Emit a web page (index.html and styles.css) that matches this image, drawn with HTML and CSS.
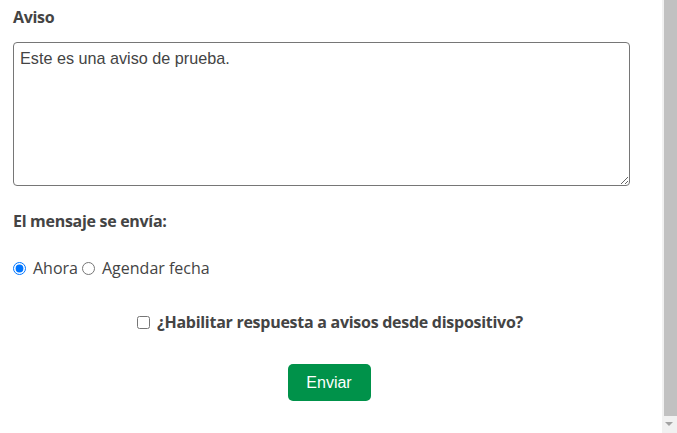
FILE: index.html
```html
<!DOCTYPE html>
<html lang="es">
<head>
  <meta charset="UTF-8">
  <meta name="viewport" content="width=device-width, initial-scale=1.0">
  <title>Aviso</title>
  <link rel="stylesheet" href="styles.css">
</head>
<body>
  <div class="page">
    <form class="content">
      <label class="field-label" for="aviso">Aviso</label>
      <textarea id="aviso" class="aviso-text">Este es una aviso de prueba.</textarea>

      <p class="field-label envio-label">El mensaje se envía:</p>
      <div class="radio-row">
        <input type="radio" name="envio" id="ahora" checked>
        <label for="ahora">Ahora</label>
        <input type="radio" name="envio" id="agendar">
        <label for="agendar">Agendar fecha</label>
      </div>

      <div class="check-row">
        <input type="checkbox" id="respuesta">
        <label for="respuesta">¿Habilitar respuesta a avisos desde dispositivo?</label>
      </div>

      <div class="actions">
        <button type="button" class="btn-enviar">Enviar</button>
      </div>
    </form>

    <div class="scrollbar">
      <div class="scroll-thumb"></div>
      <div class="scroll-arrow"></div>
    </div>
  </div>
</body>
</html>
```

FILE: styles.css
```css
* {
  box-sizing: border-box;
}

body {
  margin: 0;
  font-family: 'Open Sans', sans-serif;
  color: #444;
  background: #fff;
}

.page {
  display: flex;
  height: 433px;
  overflow: hidden;
}

.content {
  flex: 1;
  padding: 6px 0 0 13px;
}

.field-label {
  display: block;
  margin: 0;
  font-size: 16px;
  font-weight: 700;
  line-height: 22px;
  letter-spacing: -0.3px;
  color: #444;
}

.aviso-text {
  display: block;
  width: 617px;
  height: 144px;
  margin-top: 14px;
  padding: 6px;
  border: 1px solid #767676;
  border-radius: 4px;
  font-family: 'Liberation Sans', Arial, sans-serif;
  font-size: 16.2px;
  color: #444;
}

.envio-label {
  margin-top: 24px;
}

.radio-row {
  display: flex;
  align-items: center;
  margin-top: 25px;
  font-size: 16px;
  line-height: 22px;
}

.radio-row input {
  margin: 0 7px 0 0;
  width: 13px;
  height: 13px;
}

.radio-row label {
  margin-right: 4px;
}

.check-row {
  display: flex;
  justify-content: center;
  align-items: center;
  margin-top: 32px;
  padding-right: 15px;
  font-size: 16px;
  font-weight: 700;
  line-height: 22px;
  letter-spacing: -0.27px;
}

.check-row input {
  margin: 0 7px 0 0;
  width: 13px;
  height: 13px;
}

.actions {
  display: flex;
  justify-content: center;
  margin-top: 31px;
  padding-right: 17px;
}

.btn-enviar {
  width: 83px;
  height: 37px;
  border: none;
  border-radius: 5px;
  background-color: #00924a;
  color: #fff;
  font-family: 'Liberation Sans', Arial, sans-serif;
  font-size: 16px;
  cursor: pointer;
}

.scrollbar {
  width: 15px;
  background: #f1f1f1;
  display: flex;
  flex-direction: column;
  align-items: flex-end;
}

.scroll-thumb {
  width: 13px;
  height: 416px;
  background: #c1c1c1;
}

.scroll-arrow {
  margin: 6px 4px 0 0;
  width: 0;
  height: 0;
  border-left: 4px solid transparent;
  border-right: 4px solid transparent;
  border-top: 4px solid #a3a3a3;
}
```
